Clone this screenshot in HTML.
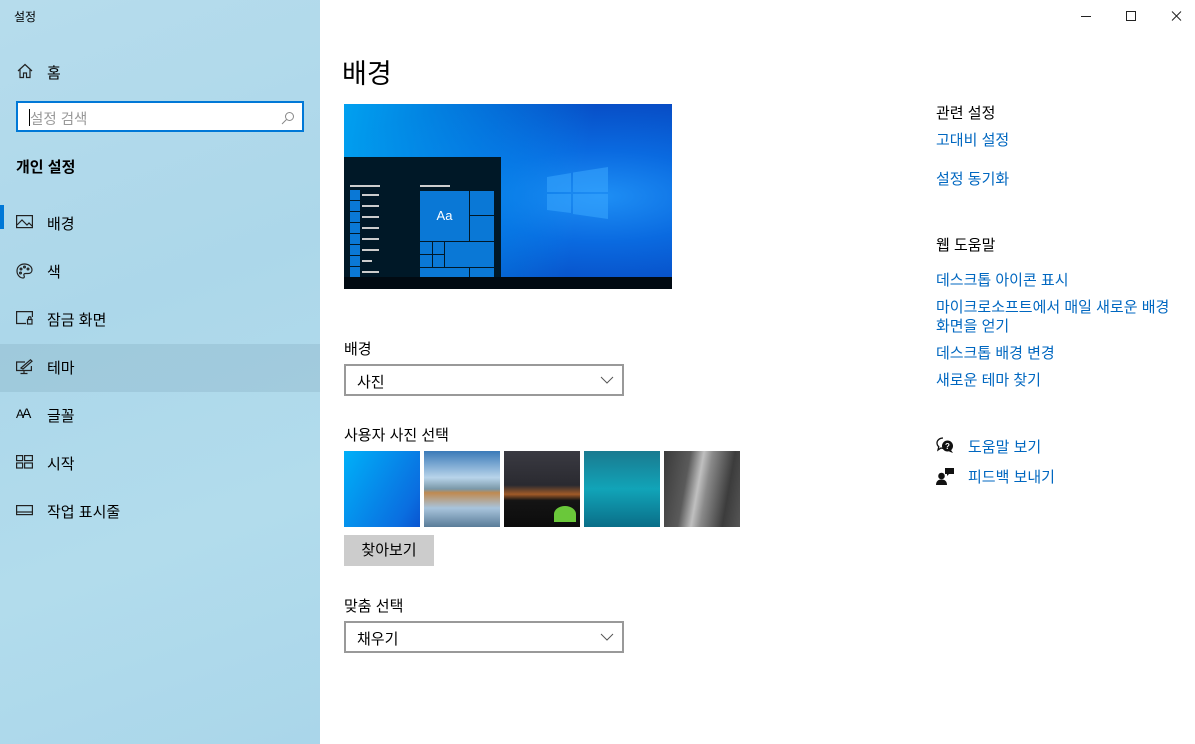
<!DOCTYPE html>
<html><head><meta charset="utf-8"><style>
*{margin:0;padding:0;box-sizing:border-box}
body{width:1195px;height:744px;overflow:hidden;background:#fff;font-family:"Liberation Sans","Noto Sans CJK KR",sans-serif;color:#000;position:relative}
.side{position:absolute;left:0;top:0;width:320px;height:744px;background:linear-gradient(160deg,#b6dcec 0%,#acd7ea 40%,#b2dcec 70%,#aad6ea 100%)}
.abs{position:absolute}
.t{font-size:15px;white-space:nowrap}
.nav{position:absolute;left:0;width:320px;height:48px}
.nav .ic{position:absolute;left:16px;top:15px}
.nav span{position:absolute;left:47px;top:13px;font-size:15px}
.link{color:#0067c0;font-size:15px;position:absolute;left:936px;white-space:nowrap}
.sel{border:2px solid #999;background:#fff;position:absolute;left:344px;width:280px;height:32px}
.sel span{position:absolute;left:11px;top:5px;font-size:15px}
.sel svg{position:absolute;right:8px;top:10px}
</style></head><body>
<div class="side">
<div class="abs" style="left:14px;top:8px;font-size:12px">설정</div>
<svg class="abs" style="left:17px;top:63px" width="16" height="16" viewBox="0 0 16 16" fill="none" stroke="#222" stroke-width="1.2"><path d="M1 8L8 1.5 15 8M3 6.5V14.5H6.5V10H9.5V14.5H13V6.5"/></svg>
<div class="abs t" style="left:47px;top:62px">홈</div>
<div class="abs" style="left:16px;top:101px;width:288px;height:31px;border:2px solid #0078d7;background:#fff">
<div class="abs" style="left:11px;top:6px;width:1px;height:17px;background:#000"></div>
<div class="abs" style="left:12px;top:5px;font-size:14.5px;color:#999">설정 검색</div>
<svg class="abs" style="right:7px;top:8px" width="14" height="14" viewBox="0 0 14 14" fill="none" stroke="#888" stroke-width="1"><circle cx="8.5" cy="5.5" r="4"/><path d="M5.5 8.5L1 13"/></svg>
</div>
<div class="abs" style="left:16px;top:156px;font-size:15px;font-weight:bold">개인 설정</div>
<div class="abs" style="left:0;top:205px;width:4px;height:24px;background:#0078d7"></div>
<div class="nav" style="top:200px"><svg class="ic" width="17" height="14" viewBox="0 0 17 14" fill="none" stroke="#222" stroke-width="1.2"><rect x=".6" y=".6" width="15.8" height="12"/><path d="M1 10L6 5 11 10 13 8 16 11"/></svg><span>배경</span></div>
<div class="nav" style="top:248px"><svg class="ic" width="17" height="16" viewBox="0 0 17 16" fill="none" stroke="#222" stroke-width="1.2"><path d="M8.5 1C4 1 1 4 1 8s3 7 6 7c1.5 0 1.5-1.5 1-2.5s0-2 1.5-2H12c2.5 0 4-1.5 4-3.5C16 3.5 12.5 1 8.5 1z"/><circle cx="5" cy="6" r=".9"/><circle cx="8.5" cy="4" r=".9"/><circle cx="12" cy="6" r=".9"/><circle cx="4.5" cy="10" r=".9"/></svg><span>색</span></div>
<div class="nav" style="top:296px"><svg class="ic" width="17" height="14" viewBox="0 0 17 14" fill="none" stroke="#222" stroke-width="1.2"><path d="M10 12.5H.6V.6H16.4V6"/><rect x="11.5" y="8.5" width="4.5" height="4.5"/><path d="M12.5 8.5V7a1.2 1.2 0 012.5 0v1.5"/></svg><span>잠금 화면</span></div>
<div class="nav" style="top:344px;background:rgba(120,160,180,.25)"><svg class="ic" width="17" height="16" viewBox="0 0 17 16" fill="none" stroke="#222" stroke-width="1.2"><path d="M9 3H.6V11.5H15.4V7M8 11.5V14.5M4.5 14.5H11.5"/><path d="M5 9L14.5 .8 16 2.2 7 10z"/></svg><span>테마</span></div>
<div class="nav" style="top:392px"><div class="ic" style="font-size:12px;top:13px;letter-spacing:-2px">A<span style="position:static;font-size:14px">A</span></div><span>글꼴</span></div>
<div class="nav" style="top:440px"><svg class="ic" width="17" height="14" viewBox="0 0 17 14" fill="none" stroke="#222" stroke-width="1.2"><rect x=".6" y=".6" width="6" height="5"/><rect x="8.6" y=".6" width="7.8" height="5"/><rect x=".6" y="8" width="6" height="5"/><rect x="8.6" y="8" width="7.8" height="5"/></svg><span>시작</span></div>
<div class="nav" style="top:488px"><svg class="ic" width="17" height="14" viewBox="0 0 17 14" fill="none" stroke="#222" stroke-width="1.2"><rect x=".6" y="2.6" width="15.8" height="9"/><path d="M1 9H16"/></svg><span>작업 표시줄</span></div>
</div>

<svg class="abs" style="left:1076px;top:10px" width="110" height="12" viewBox="0 0 110 12" fill="none" stroke="#222" stroke-width="1"><path d="M5 6.5H15"/><rect x="50.5" y="1.5" width="9" height="9"/><path d="M96 1.5L105 10.5M105 1.5L96 10.5"/></svg>

<div class="abs" style="left:342px;top:52px;font-size:27px">배경</div>

<div class="abs" style="left:344px;top:104px;width:328px;height:185px;overflow:hidden;background:radial-gradient(ellipse at 78% 50%,#1e8ff5 0%,#0a6ae0 35%,#0747c0 80%),linear-gradient(90deg,#00a4f0,#0a50c8)">
<div class="abs" style="left:0;top:0;width:328px;height:185px;background:linear-gradient(100deg,rgba(0,170,245,.9) 0%,rgba(0,150,240,.5) 40%,rgba(0,0,0,0) 70%)"></div>
<svg class="abs" style="left:200px;top:60px" width="68" height="68" viewBox="0 0 68 68"><path d="M3 13L27 9V28H3z M29 8.5L64 3V28H29z M3 30H27V49L3 46z M29 30H64V55L29 50z" fill="#3aa8ff" opacity=".55"/></svg>
<div class="abs" style="left:0;top:53px;width:157px;height:120px;background:#001827">
<div class="abs" style="left:6px;top:28px;width:30px;height:2px;background:#ccc"></div>
<div class="abs" style="left:76px;top:28px;width:30px;height:2px;background:#ccc"></div>
</div>
<div class="abs" style="left:0;top:173px;width:328px;height:12px;background:#010a12"></div>
</div>
<div class="abs" style="left:344px;top:157px">
<div class="abs" style="left:6px;top:33px;width:10px;height:10px;background:#0a78d6;box-shadow:0 11px #0a78d6,0 22px #0a78d6,0 33px #0a78d6,0 44px #0a78d6,0 55px #0a78d6,0 66px #0a78d6,0 77px #0a78d6"></div>
<div class="abs" style="left:18px;top:37px;width:17px;height:2px;background:#ccc;box-shadow:0 11px #ccc,0 22px #ccc,0 33px #ccc,0 44px #ccc,0 55px #ccc,0 77px #ccc"></div>
<div class="abs" style="left:18px;top:103px;width:10px;height:2px;background:#ccc"></div>
<div class="abs" style="left:76px;top:34px;width:49px;height:50px;background:#0a78d6;color:#fff;font-size:13px;text-align:center;line-height:50px">Aa</div>
<div class="abs" style="left:126px;top:34px;width:24px;height:24px;background:#0a78d6"></div>
<div class="abs" style="left:126px;top:59px;width:24px;height:25px;background:#0a78d6"></div>
<div class="abs" style="left:76px;top:85px;width:12px;height:12px;background:#0a78d6"></div>
<div class="abs" style="left:89px;top:85px;width:11px;height:12px;background:#0a78d6"></div>
<div class="abs" style="left:76px;top:98px;width:12px;height:12px;background:#0a78d6"></div>
<div class="abs" style="left:89px;top:98px;width:11px;height:12px;background:#0a78d6"></div>
<div class="abs" style="left:101px;top:85px;width:49px;height:25px;background:#0a78d6"></div>
<div class="abs" style="left:76px;top:111px;width:49px;height:9px;background:#0a78d6"></div>
<div class="abs" style="left:126px;top:111px;width:24px;height:9px;background:#0a78d6"></div>
</div>

<div class="abs t" style="left:344px;top:338px">배경</div>
<div class="sel" style="top:364px"><span>사진</span><svg width="14" height="8" viewBox="0 0 14 8" fill="none" stroke="#555" stroke-width="1"><path d="M1 1L7 7 13 1"/></svg></div>

<div class="abs t" style="left:344px;top:424px">사용자 사진 선택</div>
<div class="abs" style="left:344px;top:451px;width:76px;height:76px;background:linear-gradient(120deg,#00b0f8,#0a6ee0 80%,#0a55d0)"></div>
<div class="abs" style="left:424px;top:451px;width:76px;height:76px;background:linear-gradient(180deg,#3a7ab8 0%,#b8d4ea 35%,#7a98a8 50%,#c08a50 55%,#a8c4dc 75%,#5a7c98 100%)"></div>
<div class="abs" style="left:504px;top:451px;width:76px;height:76px;background:linear-gradient(180deg,#3a3a42 0%,#2a2a30 45%,#a05a28 57%,#141414 65%,#0c0c0c 100%)"><div class="abs" style="left:50px;top:55px;width:22px;height:16px;border-radius:50% 50% 0 0;background:#6ac83a"></div></div>
<div class="abs" style="left:584px;top:451px;width:76px;height:76px;background:linear-gradient(180deg,#1a7a90 0%,#11a4b8 50%,#0a6e88 100%)"></div>
<div class="abs" style="left:664px;top:451px;width:76px;height:76px;background:linear-gradient(100deg,#3a3a3a 0%,#5a5a5a 30%,#c0c0c0 45%,#8a8a8a 55%,#3c3c3c 80%,#555 100%)"></div>

<div class="abs" style="left:344px;top:535px;width:90px;height:31px;background:#ccc;font-size:15px;text-align:center;line-height:31px">찾아보기</div>

<div class="abs t" style="left:344px;top:595px">맞춤 선택</div>
<div class="sel" style="top:621px"><span>채우기</span><svg width="14" height="8" viewBox="0 0 14 8" fill="none" stroke="#555" stroke-width="1"><path d="M1 1L7 7 13 1"/></svg></div>

<div class="abs t" style="left:936px;top:102px">관련 설정</div>
<div class="link" style="top:129px">고대비 설정</div>
<div class="link" style="top:168px">설정 동기화</div>
<div class="abs t" style="left:936px;top:234px">웹 도움말</div>
<div class="link" style="top:269px">데스크톱 아이콘 표시</div>
<div class="link" style="top:296px">마이크로소프트에서 매일 새로운 배경</div>
<div class="link" style="top:315px">화면을 얻기</div>
<div class="link" style="top:342px">데스크톱 배경 변경</div>
<div class="link" style="top:369px">새로운 테마 찾기</div>
<svg class="abs" style="left:936px;top:437px" width="18" height="17" viewBox="0 0 18 17"><path d="M7 1C3.5 1 1 3.3 1 6c0 1.5.7 2.8 1.8 3.7L2 13l3-2c.6.2 1.3.3 2 .3" fill="none" stroke="#111" stroke-width="1.3"/><circle cx="11.5" cy="9" r="5.5" fill="#111"/><text x="11.5" y="12" font-size="8" fill="#fff" text-anchor="middle" font-weight="bold" font-family="Liberation Sans">?</text><path d="M15 13l2 3-4-1.5z" fill="#111"/></svg>
<div class="link" style="left:968px;top:436px">도움말 보기</div>
<svg class="abs" style="left:936px;top:467px" width="18" height="18" viewBox="0 0 18 18" fill="#111"><circle cx="5.5" cy="9" r="3.3"/><path d="M0 18c0-4 2.5-5.5 5.5-5.5S11 14 11 18z"/><path d="M9 1h9v6h-5l-2 2V7H9z"/></svg>
<div class="link" style="left:968px;top:466px">피드백 보내기</div>
</body></html>
